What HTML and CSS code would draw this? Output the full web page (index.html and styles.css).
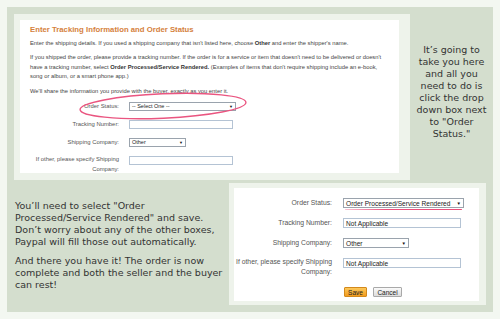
FILE: index.html
```html
<!DOCTYPE html>
<html lang="en">
<head>
  <meta charset="UTF-8">
  <title>Enter Tracking Information and Order Status</title>
  <link rel="stylesheet" href="styles.css">
</head>
<body>
<div class="board">
  <div class="row row-top">
    <div class="shot shot-main">
      <div class="sheet">
        <h1>Enter Tracking Information and Order Status</h1>
        <p>Enter the shipping details. If you used a shipping company that isn't listed here, choose <b>Other</b> and enter the shipper's name.</p>
        <p>If you shipped the order, please provide a tracking number. If the order is for a service or item that doesn't need to be delivered or doesn't<br>have a tracking number, select <b>Order Processed/Service Rendered.</b> (Examples of items that don't require shipping include an e-book,<br>song or album, or a smart phone app.)</p>
        <p>We'll share the information you provide with the buyer, exactly as you enter it.</p>
        <div class="form">
          <div class="field"><span class="label">Order Status:</span><span class="ctl select w-status">-- Select One --<i>&#9660;</i></span></div>
          <div class="field"><span class="label">Tracking Number:</span><span class="ctl input w-input"></span></div>
          <div class="field"><span class="label">Shipping Company:</span><span class="ctl select w-other">Other<i>&#9660;</i></span></div>
          <div class="field"><span class="label label-two">If other, please specify Shipping<br>Company:</span><span class="ctl input w-input"></span></div>
        </div>
        <svg class="circle" width="172" height="30" viewBox="0 0 172 30"><ellipse cx="86" cy="15" rx="83" ry="12.2" transform="rotate(-2.5 86 15)" fill="none" stroke="#ea5580" stroke-width="1.4"/></svg>
      </div>
    </div>
    <div class="note note-top">It&rsquo;s going to<br>take you here<br>and all you<br>need to do is<br>click the drop<br>down box next<br>to "Order<br>Status."</div>
  </div>
  <div class="row row-bottom">
    <div class="note note-bottom">
      <p>You&rsquo;ll need to select "Order<br>Processed/Service Rendered" and save.<br>Don&rsquo;t worry about any of the other boxes,<br>Paypal will fill those out automatically.</p>
      <p>And there you have it! The order is now<br>complete and both the seller and the buyer<br>can rest!</p>
    </div>
    <div class="shot shot-form">
      <div class="sheet sheet-form">
        <div class="field"><span class="label">Order Status:</span><span class="ctl select w-status2">Order Processed/Service Rendered<i>&#9660;</i></span></div>
        <div class="field"><span class="label">Tracking Number:</span><span class="ctl input w-input2">Not Applicable</span></div>
        <div class="field"><span class="label">Shipping Company:</span><span class="ctl select w-other2">Other<i>&#9660;</i></span></div>
        <div class="field"><span class="label label-two">If other, please specify Shipping<br>Company:</span><span class="ctl input w-input2">Not Applicable</span></div>
        <div class="buttons"><span class="btn btn-save">Save</span><span class="btn btn-cancel">Cancel</span></div>
        <span class="underline"></span>
      </div>
    </div>
  </div>
</div>
</body>
</html>
```

FILE: styles.css
```css
body { margin: 0; background: #f3f7f1; font-family: "Liberation Sans", Arial, sans-serif; }
.board { margin: 7px; width: 486px; height: 305px; box-sizing: border-box; background: #d4dece; padding: 7px 0 7px 7px; display: flex; flex-direction: column; gap: 3px; }
.row { display: flex; }
.row-top { height: 166px; }
.row-bottom { height: 122px; }

.shot { box-sizing: border-box; border-style: solid; border-color: #eef3eb; background: #fff; }
.shot-main { width: 396px; border-width: 6px 11px 7px 6px; }
.shot-form { width: 257px; border-width: 5px 7px 4px 5px; margin-left: auto; margin-right: 7px; }
.sheet { position: relative; height: 100%; box-sizing: border-box; padding: 4.5px 0 0 10px; color: #444; }

h1 { margin: 0; font-size: 7.75px; line-height: 9px; font-weight: bold; color: #d5813c; }
.sheet p { margin: 5px 0 0; font-size: 5.8px; line-height: 9.5px; }
.sheet b { color: #333; }

.form { margin: 5.5px 0 0 -10px; }
.field { display: flex; align-items: flex-start; margin-bottom: 9px; }
.label { width: 99px; flex: none; text-align: right; font-size: 5.9px; line-height: 9px; color: #555; }
.label-two { line-height: 9.5px; margin-top: -0.5px; }
.ctl { box-sizing: border-box; height: 9px; margin-left: 10px; display: flex; align-items: center; justify-content: space-between; padding: 0 2px; font-size: 5.5px; color: #222; background: #fff; }
.ctl i { font-style: normal; font-size: 4px; color: #111; }
.select { border: 1px solid #9aa3ad; }
.input { border: 1px solid #b4c3d4; }
.w-status { width: 107px; }
.w-input { width: 104px; }
.w-other { width: 57px; }

.circle { position: absolute; left: 57px; top: 71px; }

.sheet-form { padding: 10px 0 0 0; }
.sheet-form .field { margin-bottom: 10px; }
.sheet-form .label { width: 98px; font-size: 6.8px; line-height: 10px; }
.sheet-form .label-two { line-height: 10px; margin-top: -1px; }
.sheet-form .ctl { height: 10px; margin-left: 11px; font-size: 6.6px; }
.sheet-form .ctl i { font-size: 4.5px; }
.w-status2 { width: 121px; }
.w-input2 { width: 118px; }
.w-other2 { width: 66px; }
.buttons { display: flex; gap: 6px; margin: 3px 0 0 110px; }
.btn { box-sizing: border-box; height: 10px; display: flex; align-items: center; justify-content: center; font-size: 6.5px; color: #222; border-radius: 1px; }
.btn-save { width: 23px; background: linear-gradient(#fcc85a, #f29b1d); border: 1px solid #d3891c; }
.btn-cancel { width: 29px; background: linear-gradient(#fafafa, #dcdcdc); border: 1px solid #a9a9a9; }
.underline { position: absolute; left: 111px; top: 20.5px; width: 117px; height: 1.6px; border-radius: 1px; background: linear-gradient(to right, rgba(236, 80, 122, 0.35), #ec4f7b 35%, #ec4f7b); }

.note { font-family: "DejaVu Sans", Verdana, sans-serif; font-size: 9.5px; line-height: 12px; color: #333; }
.note-top { flex: 1; text-align: center; padding-top: 30px; }
.note-bottom { width: 214px; padding: 17px 0 0 1px; }
.note-bottom p { margin: 0 0 7px; }
```
